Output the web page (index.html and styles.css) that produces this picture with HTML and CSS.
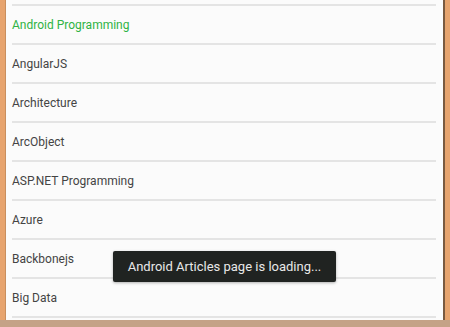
FILE: index.html
```html
<!DOCTYPE html>
<html>
<head>
  <title>Articles</title>
  <link rel="stylesheet" href="styles.css">
</head>
<body>
  <div class="frame">
    <div class="panel">
      <ul class="topics">
        <li class="active">Android Programming</li>
        <li>AngularJS</li>
        <li>Architecture</li>
        <li>ArcObject</li>
        <li>ASP.NET Programming</li>
        <li>Azure</li>
        <li>Backbonejs</li>
        <li>Big Data</li>
      </ul>
    </div>
    <div class="bottom"></div>
  </div>
  <div class="toast">Android Articles page is loading...</div>
</body>
</html>
```

FILE: styles.css
```css
html, body {
  margin: 0;
  height: 100%;
  overflow: hidden;
}

body {
  background: #e7a46e;
  font-family: Roboto, "Noto Sans", sans-serif;
}

.frame {
  display: flex;
  flex-direction: column;
  height: 327px;
}

.panel {
  flex: 1;
  margin: 0 5px 0 5px;
  background: #fbfbfb;
  border-left: 1px solid #c98f5e;
  border-right: 2px solid #7a5a40;
  overflow: hidden;
}

.bottom {
  height: 7px;
  background: #c4a287;
}

.topics {
  list-style: none;
  margin: 0;
  padding: 4px 7px 0 6px;
}

.topics li {
  border-top: 2px solid #e4e4e4;
  height: 37px;
  line-height: 39px;
  font-size: 12px;
  color: #444;
}

.topics li:last-child {
  border-bottom: 2px solid #e4e4e4;
}

.topics li.active {
  color: #2fb344;
}

.toast {
  position: absolute;
  left: 113px;
  top: 251px;
  width: 223px;
  height: 31px;
  line-height: 31px;
  text-align: center;
  background: #202321;
  color: #e8e8e8;
  font-size: 13px;
  border-radius: 2px;
  box-shadow: 0 1px 3px rgba(0, 0, 0, 0.3);
}
```
